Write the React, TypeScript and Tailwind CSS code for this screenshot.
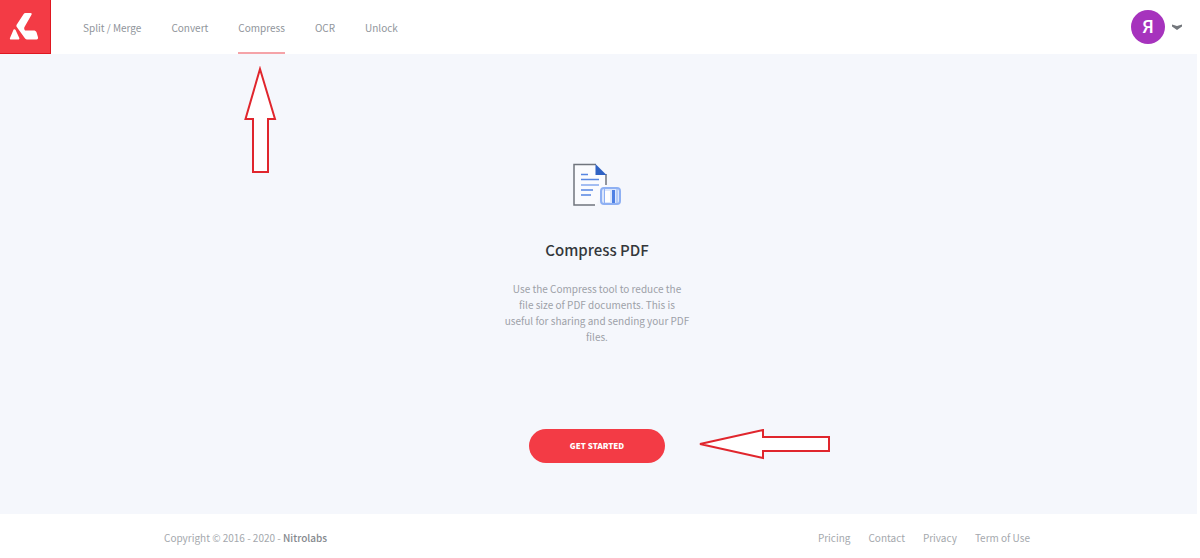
import React from 'react'

const navItems = [
  { label: 'Split / Merge', href: '#split' },
  { label: 'Convert', href: '#convert' },
  { label: 'Compress', href: '#compress', active: true },
  { label: 'OCR', href: '#ocr' },
  { label: 'Unlock', href: '#unlock' }
]

const footerLinks = ['Pricing', 'Contact', 'Privacy', 'Term of Use']

const Logo: React.FC = () => (
  <svg className="h-7 w-8" viewBox="0 0 32 28" fill="#ffffff" aria-hidden="true">
    <path d="M14.500 1.200C15 .4 15.700 0 16.500 0H21.500C22.800 0 23 .8 22.500 1.700L15.500 14C15 15 15 16 16 17.500H24.500C26 17.500 27 18 27.500 19.300L29 24.300C29.300 25.500 28.800 26.500 27.600 26.500H19C17.500 26.500 16.500 26 15.700 25L7.800 14C7.200 13 7.300 12.200 7.800 11.400Z" />
    <path d="M4.500 16.800C5.200 16 6 16.200 6.600 17L10.300 25C10.600 25.800 10.200 26.500 9.200 26.500H2C1 26.500 .6 25.700 1 24.900Z" />
  </svg>
)

const UpArrow: React.FC = () => (
  <svg
    className="pointer-events-none absolute top-full left-1/2 mt-3 h-[108px] w-9 -translate-x-1/2"
    viewBox="0 0 36 108"
    fill="#ffffff"
    stroke="#e0262d"
    strokeWidth="2"
    aria-hidden="true"
  >
    <path d="M16 3L31 53H24V106H9V53H1.500Z" />
  </svg>
)

const LeftArrow: React.FC = () => (
  <svg
    className="pointer-events-none absolute top-0 left-full ml-8 h-8 w-[134px]"
    viewBox="0 0 134 32"
    fill="#ffffff"
    stroke="#e0262d"
    strokeWidth="2"
    aria-hidden="true"
  >
    <path d="M3 15L66 1V8H132V22H66V29Z" />
  </svg>
)

const DocumentIcon: React.FC = () => (
  <svg className="h-11 w-[50px]" viewBox="0 0 50 44" fill="none" aria-hidden="true">
    <path d="M24 42H2V1.500H24L34 12V22" fill="#fafbfe" />
    <path d="M23 42H2V1.500H24M34 11V22" stroke="#70757d" strokeWidth="1.500" />
    <path d="M23.500 1L34.500 12H23.500Z" fill="#2f62c4" />
    <path d="M9 11.500H16M9 16.500H27M9 27H21M9 32H19" stroke="#5585e2" strokeWidth="1.500" />
    <path d="M9 22H27" stroke="#a3bdf2" strokeWidth="2" />
    <rect x="29" y="25" width="19" height="16" rx="3" fill="#dce7fc" stroke="#8eb0f3" strokeWidth="2" />
    <rect x="33" y="28" width="5" height="11" fill="#ffffff" />
    <path d="M32.500 26V40M45 26V40" stroke="#8eb0f3" />
    <path d="M41.500 27V40" stroke="#4e80e4" strokeWidth="3" />
  </svg>
)

const Header: React.FC = () => (
  <header className="flex h-[54px] items-stretch bg-white">
    <a href="#home" aria-label="Home" className="flex w-[51px] items-center justify-center border-r border-b border-[#df1720] bg-[#f33b45]">
      <Logo />
    </a>
    <nav className="ml-8 flex gap-[30px] text-[10px] text-[#90959b]">
      {navItems.map(item => (
        <div key={item.label} className="relative flex">
          <a
            href={item.href}
            className={item.active ? 'flex items-center border-y-2 border-t-transparent border-b-[#f5a3a8]' : 'flex items-center'}
          >
            {item.label}
          </a>
          {item.active && <UpArrow />}
        </div>
      ))}
    </nav>
    <button type="button" aria-label="Account" className="mr-[17px] ml-auto flex items-center gap-1.5">
      <span className="flex size-[34px] items-center justify-center rounded-full bg-[#a633bd] font-['Roboto',sans-serif] text-lg leading-none font-medium text-white">
        Я
      </span>
      <svg className="h-1.5 w-3" viewBox="0 0 12 6" fill="#73777c" aria-hidden="true">
        <path d="M1 0.500L6 2L11 0.500V2.500L6 6L1 2.500Z" />
      </svg>
    </button>
  </header>
)

const App: React.FC = () => {
  return (
    <div className="flex min-h-screen flex-col overflow-hidden bg-white font-['Noto_Sans_CJK_SC','Noto_Sans',sans-serif]">
      <Header />
      <main className="mr-[3px] flex flex-1 flex-col items-center bg-[#f5f7fc] pt-[109px] pr-[3px] pb-[51px]">
        <DocumentIcon />
        <h1 className="mt-[31px] text-[15px] leading-6 font-medium text-[#34373b]">Compress PDF</h1>
        <p className="mt-[19px] text-center text-[10px] leading-4 text-[#9da1a8]">
          Use the Compress tool to reduce the <br />
          file size of PDF documents. This is <br />
          useful for sharing and sending your PDF <br />
          files.
        </p>
        <div className="relative mt-auto">
          <button type="button" className="h-[34px] w-[136px] rounded-full bg-[#f33b45] text-[8px] font-black text-white">
            GET STARTED
          </button>
          <LeftArrow />
        </div>
      </main>
      <footer className="mr-[6px] bg-white px-4 pt-4 pb-3 text-[10px] leading-4 text-[#a4a8ad]">
        <div className="mx-auto flex max-w-[866px] justify-between">
          <p>
            Copyright © 2016 - 2020 - <span className="font-medium text-[#85898e]">Nitrolabs</span>
          </p>
          <nav className="flex gap-[18px]">
            {footerLinks.map(link => (
              <a key={link} href="#footer">{link}</a>
            ))}
          </nav>
        </div>
      </footer>
    </div>
  )
}

export default App
